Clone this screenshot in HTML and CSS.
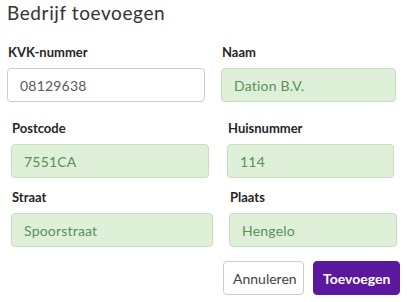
FILE: index.html
```html
<!DOCTYPE html>
<html lang="nl">
<head>
<meta charset="utf-8">
<title>Bedrijf toevoegen</title>
<link rel="stylesheet" href="styles.css">
</head>
<body>
<div class="dialog">
  <h1 class="title">Bedrijf toevoegen</h1>
  <div class="row row-1">
    <div class="field">
      <label class="label">KVK-nummer</label>
      <div class="input">08129638</div>
    </div>
    <div class="field">
      <label class="label">Naam</label>
      <div class="input input-ok">Dation B.V.</div>
    </div>
  </div>
  <div class="row row-2">
    <div class="field">
      <label class="label">Postcode</label>
      <div class="input input-ok">7551CA</div>
    </div>
    <div class="field">
      <label class="label">Huisnummer</label>
      <div class="input input-ok">114</div>
    </div>
  </div>
  <div class="row row-3">
    <div class="field">
      <label class="label">Straat</label>
      <div class="input input-ok">Spoorstraat</div>
    </div>
    <div class="field">
      <label class="label">Plaats</label>
      <div class="input input-ok">Hengelo</div>
    </div>
  </div>
  <div class="actions">
    <button class="btn btn-default">Annuleren</button>
    <button class="btn btn-primary">Toevoegen</button>
  </div>
</div>
</body>
</html>
```

FILE: styles.css
```css
html, body {
  margin: 0;
  padding: 0;
  background: #ffffff;
}
body {
  font-family: Lato, "Open Sans", sans-serif;
  color: #222;
  width: 407px;
  height: 302px;
  overflow: hidden;
}
.dialog {
  padding: 1px 0 0 0;
}
.title {
  margin: 0 0 0 7px;
  font-size: 19px;
  line-height: 24px;
  font-weight: 400;
  color: #333;
  letter-spacing: 0.6px;
}
.row {
  display: grid;
}
.row-1 {
  margin: 19px 0 0 7px;
  grid-template-columns: 198px 175px;
  column-gap: 16px;
}
.row-2 {
  margin: 18px 0 0 11px;
  grid-template-columns: 198px 167px;
  column-gap: 18px;
}
.row-3 {
  margin: 11px 0 0 11px;
  grid-template-columns: 202px 168px;
  column-gap: 16px;
}
.field {
  display: flex;
  flex-direction: column;
  gap: 8px;
}
.label {
  display: block;
  font-size: 13px;
  line-height: 16px;
  font-weight: 700;
  color: #262626;
  padding-left: 1px;
}
.input {
  box-sizing: border-box;
  height: 34px;
  padding: 0 12px;
  display: flex;
  align-items: center;
  font-size: 14px;
  color: #5a5a5a;
  background: #fff;
  border: 1px solid #cccccc;
  border-radius: 4px;
  letter-spacing: 0.2px;
}
.input-ok {
  background: #dff0d8;
  border-color: #c8dcc0;
  color: #5a8f5a;
}
.actions {
  display: flex;
  justify-content: flex-end;
  gap: 9px;
  margin: 14px 7px 0 0;
}
.btn {
  box-sizing: border-box;
  height: 34px;
  font-family: inherit;
  font-size: 14px;
  border-radius: 4px;
  padding: 0 9px;
  cursor: pointer;
}
.btn-default {
  width: 81px;
  background: #fff;
  color: #444;
  border: 1px solid #cccccc;
}
.btn-primary {
  width: 87px;
  background: #5b189e;
  color: #fff;
  border: 1px solid #5b189e;
  font-weight: 700;
}
```
